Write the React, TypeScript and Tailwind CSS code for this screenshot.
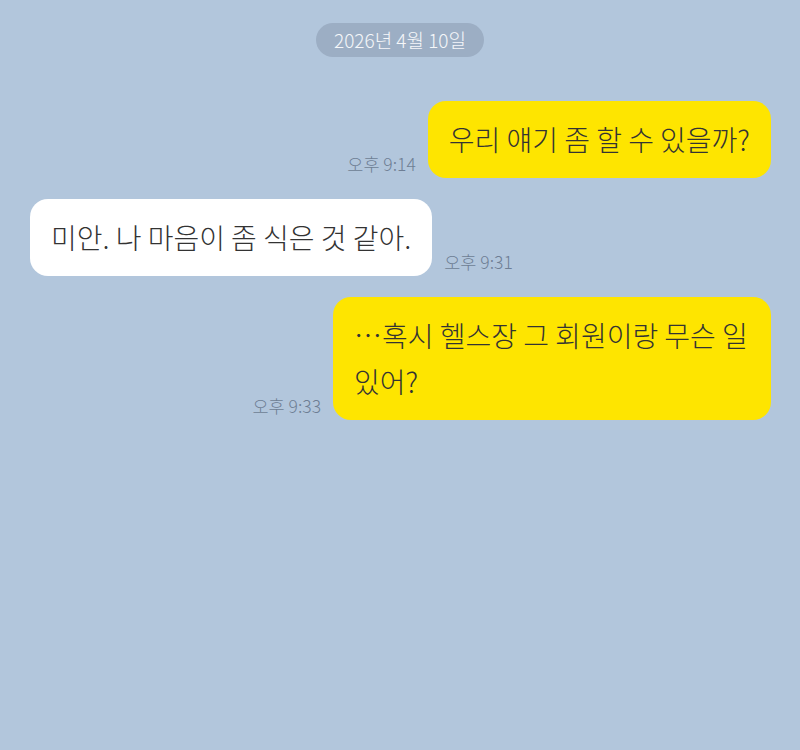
const messages = [
    { id: 1, me: true, text: "우리 얘기 좀 할 수 있을까?", time: "오후 9:14" },
    { id: 2, me: false, text: "미안. 나 마음이 좀 식은 것 같아.", time: "오후 9:31" },
    { id: 3, me: true, text: "…혹시 헬스장 그 회원이랑 무슨 일 있어?", time: "오후 9:33" },
];

const App = () => {
    return (
        <div
            className="min-h-[750px] w-full bg-[#b2c6dc] px-[29px] pt-[23px] font-light"
            style={{ fontFamily: '"Noto Sans CJK KR Light", "Noto Sans CJK KR", "Noto Sans", sans-serif' }}
        >
            <div className="flex justify-center">
                <div className="h-[34px] rounded-full bg-[#9caec4] px-[18px] text-[19px] leading-[34px] text-white/90">
                    2026년 4월 10일
                </div>
            </div>

            <div className="mt-[44px] flex flex-col gap-[21px]">
                {messages.map((m) => (
                    <div
                        key={m.id}
                        className={`flex items-end gap-[12px] ${m.me ? "flex-row-reverse" : "pl-px"}`}
                    >
                        <div
                            className={`max-w-[438px] break-keep rounded-[18px] px-[21px] pt-[15px] pb-[16px] text-[28px] leading-[46px] text-[#333333] ${
                                m.me ? "bg-[#fee500]" : "bg-white"
                            }`}
                        >
                            {m.text}
                        </div>
                        <span className="mb-[3px] text-[17.5px] leading-[22px] text-[#6e7e94]">
                            {m.time}
                        </span>
                    </div>
                ))}
            </div>
        </div>
    );
};

export default App;
